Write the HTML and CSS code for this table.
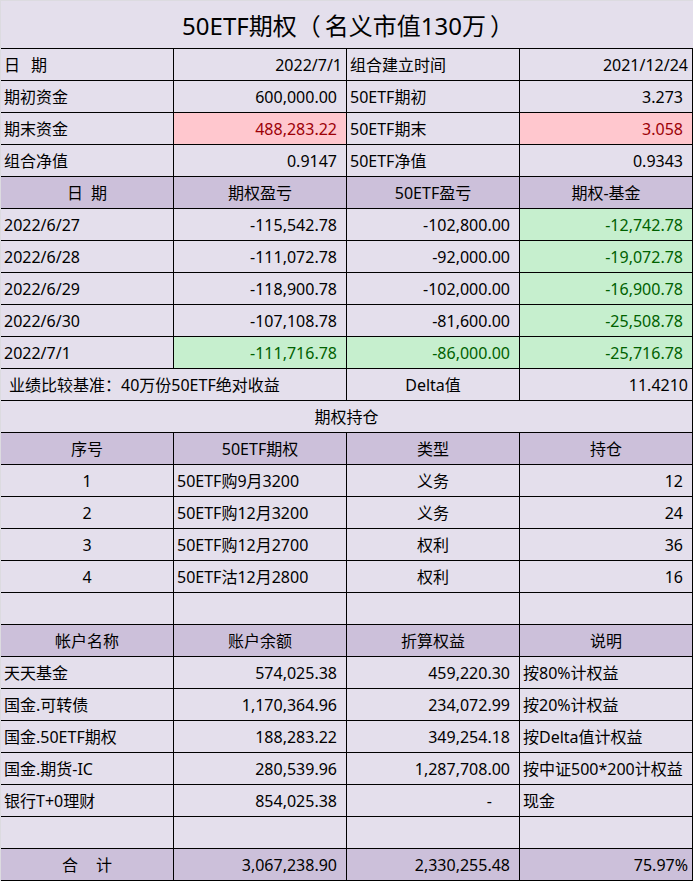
FILE: index.html
```html
<!DOCTYPE html>
<html lang="zh-CN">
<head>
<meta charset="utf-8">
<title>50ETF期权</title>
<link rel="stylesheet" href="styles.css">
</head>
<body>
<div class="sheet">
  <div class="title">50ETF期权<span class="po">（</span>名义市值130万<span class="pc">）</span></div>
  <div class="grid">
    <div class="c l">日<span class="gap1"></span>期</div>
    <div class="c rd">2022/7/1</div>
    <div class="c l">组合建立时间</div>
    <div class="c rd">2021/12/24</div>

    <div class="c l">期初资金</div>
    <div class="c r">600,000.00</div>
    <div class="c l">50ETF期初</div>
    <div class="c r">3.273</div>

    <div class="c l">期末资金</div>
    <div class="c r bad">488,283.22</div>
    <div class="c l">50ETF期末</div>
    <div class="c r bad">3.058</div>

    <div class="c l">组合净值</div>
    <div class="c r">0.9147</div>
    <div class="c l">50ETF净值</div>
    <div class="c r">0.9343</div>

    <div class="c ctr hd">日<span class="gap2"></span>期</div>
    <div class="c ctr hd">期权盈亏</div>
    <div class="c ctr hd">50ETF盈亏</div>
    <div class="c ctr hd">期权-基金</div>

    <div class="c l">2022/6/27</div>
    <div class="c r">-115,542.78</div>
    <div class="c r">-102,800.00</div>
    <div class="c r good">-12,742.78</div>

    <div class="c l">2022/6/28</div>
    <div class="c r">-111,072.78</div>
    <div class="c r">-92,000.00</div>
    <div class="c r good">-19,072.78</div>

    <div class="c l">2022/6/29</div>
    <div class="c r">-118,900.78</div>
    <div class="c r">-102,000.00</div>
    <div class="c r good">-16,900.78</div>

    <div class="c l">2022/6/30</div>
    <div class="c r">-107,108.78</div>
    <div class="c r">-81,600.00</div>
    <div class="c r good">-25,508.78</div>

    <div class="c l">2022/7/1</div>
    <div class="c r good">-111,716.78</div>
    <div class="c r good">-86,000.00</div>
    <div class="c r good">-25,716.78</div>

    <div class="c l span2 bench">业绩比较基准：40万份50ETF绝对收益</div>
    <div class="c ctr">Delta值</div>
    <div class="c rd">11.4210</div>

    <div class="c ctr span4">期权持仓</div>

    <div class="c ctr hd">序号</div>
    <div class="c ctr hd">50ETF期权</div>
    <div class="c ctr hd">类型</div>
    <div class="c ctr hd">持仓</div>

    <div class="c ctr">1</div>
    <div class="c l">50ETF购9月3200</div>
    <div class="c ctr">义务</div>
    <div class="c r">12</div>

    <div class="c ctr">2</div>
    <div class="c l">50ETF购12月3200</div>
    <div class="c ctr">义务</div>
    <div class="c r">24</div>

    <div class="c ctr">3</div>
    <div class="c l">50ETF购12月2700</div>
    <div class="c ctr">权利</div>
    <div class="c r">36</div>

    <div class="c ctr">4</div>
    <div class="c l">50ETF沽12月2800</div>
    <div class="c ctr">权利</div>
    <div class="c r">16</div>

    <div class="c"></div>
    <div class="c"></div>
    <div class="c"></div>
    <div class="c"></div>

    <div class="c ctr hd">帐户名称</div>
    <div class="c ctr hd">账户余额</div>
    <div class="c ctr hd">折算权益</div>
    <div class="c ctr hd">说明</div>

    <div class="c l">天天基金</div>
    <div class="c r">574,025.38</div>
    <div class="c r">459,220.30</div>
    <div class="c l">按80%计权益</div>

    <div class="c l">国金.可转债</div>
    <div class="c r">1,170,364.96</div>
    <div class="c r">234,072.99</div>
    <div class="c l">按20%计权益</div>

    <div class="c l">国金.50ETF期权</div>
    <div class="c r">188,283.22</div>
    <div class="c r">349,254.18</div>
    <div class="c l">按Delta值计权益</div>

    <div class="c l">国金.期货-IC</div>
    <div class="c r">280,539.96</div>
    <div class="c r">1,287,708.00</div>
    <div class="c l">按中证500*200计权益</div>

    <div class="c l">银行T+0理财</div>
    <div class="c r">854,025.38</div>
    <div class="c r dash">-</div>
    <div class="c l">现金</div>

    <div class="c"></div>
    <div class="c"></div>
    <div class="c"></div>
    <div class="c"></div>

    <div class="c ctr hd">合<span class="gap3"></span>计</div>
    <div class="c r hd">3,067,238.90</div>
    <div class="c r hd">2,330,255.48</div>
    <div class="c rd hd">75.97%</div>
  </div>
</div>
</body>
</html>
```

FILE: styles.css
```css
* { box-sizing: border-box; }

html, body {
  margin: 0;
  padding: 0;
  background: #dcdbe0;
}

body {
  font-family: "Noto Sans", "Noto Sans CJK SC", sans-serif;
  font-size: 16px;
  color: #000;
}

.sheet {
  width: 693px;
  height: 881px;
  padding: 1px 0 0 1px;
}

.title {
  height: 47px;
  background: #e4dfec;
  display: flex;
  align-items: center;
  justify-content: center;
  font-size: 24px;
  padding-left: 2px;
}

.po { margin-right: 4px; }
.pc { margin-left: 4px; }

.grid {
  display: grid;
  grid-template-columns: 173px 173px 173px 173px;
  grid-auto-rows: 32px;
  border-top: 1px solid #000;
  background: #e4dfec;
}

.c {
  border-right: 1px solid #000;
  border-bottom: 1px solid #000;
  display: flex;
  align-items: center;
  white-space: nowrap;
  overflow: hidden;
  padding: 0 4px;
  line-height: 1;
}

.l { justify-content: flex-start; padding-left: 3px; }
.r { justify-content: flex-end; padding-right: 9px; }
.rd { justify-content: flex-end; padding-right: 4px; }
.ctr { justify-content: center; }

.hd { background: #ccc0da; }
.bad { background: #ffc7ce; color: #9c0006; }
.good { background: #c6efce; color: #006100; }

.span2 { grid-column: span 2; }
.span4 { grid-column: span 4; }

.bench { padding-left: 8px; }
.dash { padding-right: 27px; }

.gap1 { display: inline-block; width: 11px; }
.gap2 { display: inline-block; width: 8px; }
.gap3 { display: inline-block; width: 18px; }
```
